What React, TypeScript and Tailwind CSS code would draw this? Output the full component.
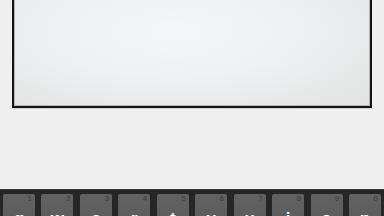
import React from "react";

const keys = [
  ["q", "1"], ["w", "2"], ["e", "3"], ["r", "4"], ["t", "5"],
  ["y", "6"], ["u", "7"], ["i", "8"], ["o", "9"], ["p", "0"],
];

export default function App() {
  return (
    <div className="w-[384px] h-[216px] overflow-hidden bg-[#efefef] flex flex-col" style={{ fontFamily: "'Liberation Sans', Arial, sans-serif" }}>
      <div className="px-[12px] shrink-0">
        <div className="h-[108px] border-x-2 border-b-2 border-[#151515] shadow-[0_1px_0_#d0d0d0]">
          <div className="h-full border-x border-b border-[#b5b5b5] bg-[radial-gradient(ellipse_at_45%_30%,#f6f7f8_0%,#eef0f1_45%,#e2e3e3_100%)]" />
        </div>
      </div>
      <div className="h-[81px] shrink-0" />
      <div className="h-[60px] shrink-0 bg-[#262626] border-t border-[#3a3a3a] pt-[4px] px-[3px] flex justify-between">
        {keys.map(([l, n]) => (
          <div key={l} className="w-[32px] h-[44px] rounded-[2px] bg-gradient-to-b from-[#626262] to-[#585858] relative flex justify-center">
            <span className="absolute right-[3px] top-[1px] text-[8px] leading-none text-[#3a3a3a]">{n}</span>
            <span className="mt-[16px] text-[17px] font-bold leading-none text-white">{l}</span>
          </div>
        ))}
      </div>
    </div>
  );
}
